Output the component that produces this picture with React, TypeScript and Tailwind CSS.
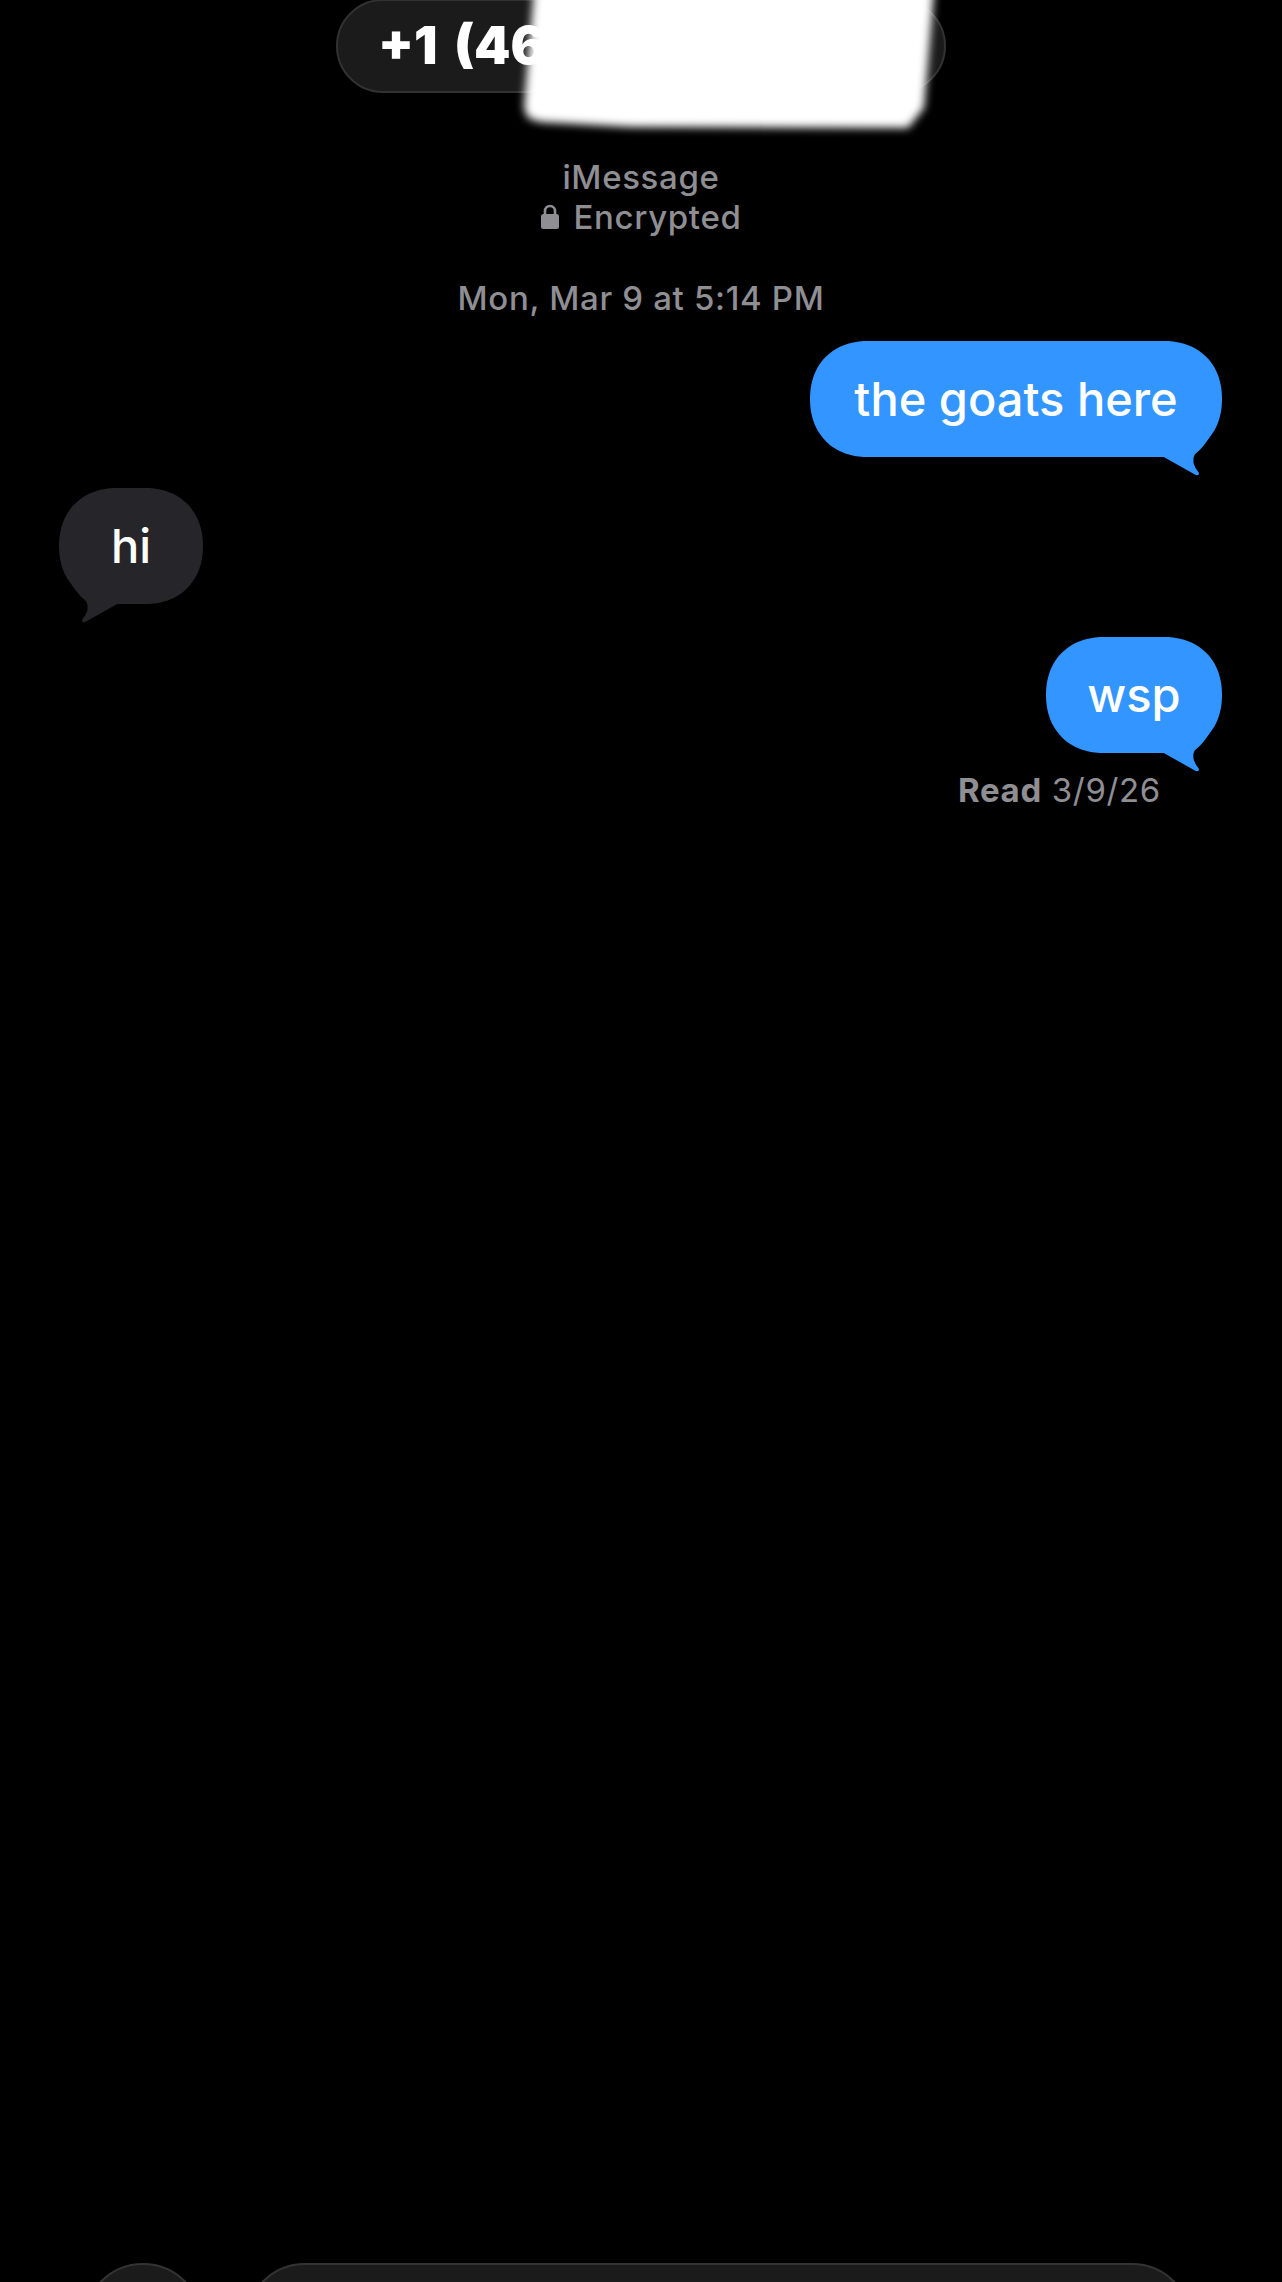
const Tail = ({ fill, flip }: { fill: string; flip?: boolean }) => {
  return (
    <svg
      width="70"
      height="50"
      viewBox="0 0 70 50"
      className={flip ? "absolute left-0 bottom-[-20px] -scale-x-100" : "absolute right-0 bottom-[-20px]"}
    >
      <path
        d="M10 29 L42 47 Q47 50 47 46 Q38 35 43 27 Q50 22 57 11 L20 6 Z"
        fill={fill}
      />
    </svg>
  );
};

const SentBubble = ({ text, className }: { text: string; className: string }) => {
  return (
    <div className={"relative self-end h-[116px] rounded-[58px] [corner-shape:superellipse(1.12)] bg-[#3395ff] flex items-center justify-center text-white text-[47px] font-medium " + className}>
      <span className="relative">{text}</span>
      <Tail fill="#3395ff" />
    </div>
  );
};

export default function App() {
  return (
    <div
      className="relative h-[2282px] w-full overflow-hidden bg-black flex flex-col"
      style={{ fontFamily: "Inter, 'Liberation Sans', sans-serif" }}
    >
      <div className="relative flex justify-center">
        <div className="-mt-px h-[94px] w-[610px] rounded-full border-2 border-[#323232] bg-[#1b1b1b] pl-10 flex items-center">
          <span className="text-white text-[52px] font-black leading-none whitespace-pre [word-spacing:6px]">+1 (46</span>
        </div>
        <div className="absolute left-[520px] top-[-10px] h-[140px] w-[420px] blur-[4px]">
          <div className="h-full w-full bg-white [clip-path:polygon(14px_0,4px_118px,8px_128px,20px_132px,110px_137px,388px_138px,404px_118px,414px_0)]"></div>
        </div>
      </div>

      <div className="mt-[64px] flex flex-col items-center text-[#8e8e93] text-[33px] font-medium leading-[40px] tracking-[0.02em]">
        <span>iMessage</span>
        <span className="flex items-center gap-[13px]">
          <svg width="20" height="28" viewBox="0 0 20 28">
            <path d="M5 12 V8 a5 5 0 0 1 10 0 V12" fill="none" stroke="#8e8e93" strokeWidth="2.6" />
            <rect x="1" y="11" width="18" height="15" rx="2.5" fill="#8e8e93" />
          </svg>
          Encrypted
        </span>
        <span className="mt-[41px]">Mon, Mar 9 at 5:14 PM</span>
      </div>

      <div className="mt-[23px] pl-[59px] pr-[60px] flex flex-col">
        <SentBubble text="the goats here" className="w-[412px]" />
        <div className="relative mt-[31px] self-start h-[116px] w-[144px] rounded-[58px] [corner-shape:superellipse(1.12)] bg-[#26262a] flex items-center justify-center text-white text-[47px] font-medium">
          <span className="relative">hi</span>
          <Tail fill="#26262a" flip />
        </div>
        <SentBubble text="wsp" className="mt-[33px] w-[176px]" />
        <div className="mt-[17px] pr-[61px] self-end text-[#8e8e93] text-[33px] leading-[40px] tracking-[0.02em]">
          <span className="font-bold">Read</span> 3/9/26
        </div>
      </div>

      <div className="mt-auto h-[19px] overflow-hidden pl-[83px] pr-[90px] flex gap-[42px]">
        <div className="h-[120px] w-[120px] shrink-0 rounded-full border-2 border-[#333333] bg-[#1b1b1b]"></div>
        <div className="h-[120px] flex-1 rounded-[60px] border-2 border-[#333333] bg-[#1b1b1b]"></div>
      </div>
    </div>
  );
}
